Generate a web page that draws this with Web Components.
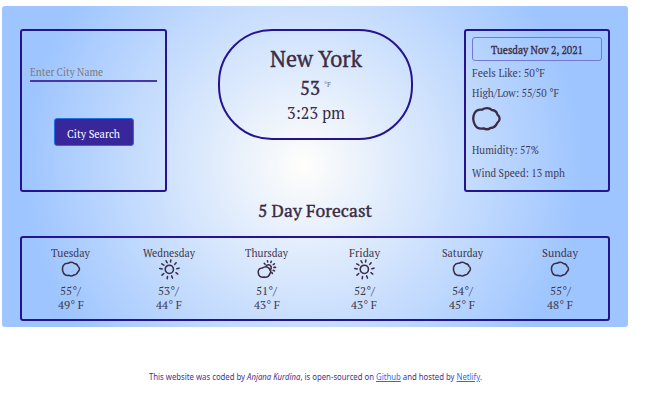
<!DOCTYPE html>
<html lang="en"><head><meta charset="utf-8"><title>Weather</title>
<style>
body{margin:0;background:#fff;color:#3b2b43;font-family:"PT Serif","Liberation Serif",serif;overflow:hidden}
</style></head><body>
<weather-app></weather-app>
<script>
const define=(name,html,ready)=>customElements.define(name,class extends HTMLElement{
  connectedCallback(){
    if(this.shadowRoot)return;
    this.attachShadow({mode:'open'}).innerHTML=typeof html==='function'?html(this):html;
    if(ready)ready(this);
  }
});
/* A single line whose glyphs are condensed or widened to fill the width in `w`. */
define('fit-text',`<style>:host{display:block;white-space:nowrap}span{display:inline-block;transform-origin:0 50%}</style><span><slot></slot></span>`,el=>{
  const s=el.shadowRoot.querySelector('span'),w=+el.getAttribute('w');
  const natural=s.getBoundingClientRect().width;
  s.style.transform=`scaleX(${w/natural})`;
  el.style.width=w+'px';
});
const cloud='<path d="M11 4.7C14 2.6 18.5 2.6 20.8 5C24 5.3 25.8 7.3 26.3 9.3C29.4 12 29.4 15.4 26.3 17.8C24.8 21.4 22.5 23 19.5 23C17 24.9 14.5 24.4 12.5 23.4C8.5 24 5.5 23 4 20C2 16 1.8 11.5 3.5 8.2C5 5.5 8 4.4 11 4.7Z"/>';
const sun='<circle cx="16" cy="14" r="6.4"/><path d="M17.9 2.5l.5-3M24.5 6.3l2.1-2.4M27.6 13l3.4-.8M26.3 19.3l2.8 2M19.6 24.2l1.3 3.4M13.2 25.3l-.5 3.2M7.4 20.5l-2.8 2.5M5 13.4l-3.8-.6M7.6 7.4L4.3 5.6M12.6 3.8L11 .8"/>';
const partly='<path d="M8.5 12C12 9 16 9.3 18 12C21.4 14 22.3 18 20 21C18.6 25 14.5 26.8 10.8 26C6 27 2 24.5 2 19.5C1.2 15 4 11.8 8.5 12Z"/><path d="M13.8 9.4C15.4 5.6 20.8 6 22 10C22.6 12.4 21.6 14.2 20.2 15.3M11.2 4.6l1.3 1.6M16.2.6l.4 2M22.2 1.4l-.8 2M27 5.4l-1.8 1.2M26.2 11l2.6 0M25 15.4l2.2 1M22.9 18.8l1 1.7"/>';
define('weather-icon',el=>`<style>:host{display:block;line-height:0}svg{width:100%;height:100%;overflow:visible;fill:none;stroke:#3b2b43;stroke-width:${el.getAttribute('stroke')||2.3};stroke-linecap:round;stroke-linejoin:round}</style><svg viewBox="0 0 31 27">${{cloud,sun,partly}[el.getAttribute('type')]}</svg>`);
define('city-search',`<style>
:host{display:flex;flex-direction:column;align-items:center;box-sizing:border-box;border:2px solid #26138f;border-radius:3px;padding:31px 7px 0}
.field{width:127px;height:18px;border-bottom:2px solid #4936a9;color:#7a7b80;font-size:11.5px;line-height:20px}
button{margin:36px 0 0;padding:2px 0 0;width:80px;height:28px;border:1px solid #236de5;border-radius:3px;background:#38279b;color:#fff;font:12px "PT Serif","Liberation Serif",serif;display:flex;align-items:center;justify-content:center}
</style><div class="field"><fit-text w="73">Enter City Name</fit-text></div><button><fit-text w="53">City Search</fit-text></button>`);
define('city-now',`<style>
:host{display:flex;flex-direction:column;align-items:center;box-sizing:border-box;border:2px solid #26138f;border-radius:54px;padding-top:13px}
.city{font-size:24px;line-height:28px;-webkit-text-stroke:.4px}
.temp{display:flex;gap:4px;align-items:flex-start;height:29px;line-height:31px;font-size:19px;-webkit-text-stroke:.35px}
small{font-size:7px;line-height:25px;color:#677189;-webkit-text-stroke:0}
.time{font-size:17.5px;line-height:24px}
</style><fit-text class="city" w="92">New York</fit-text><div class="temp"><fit-text w="20">53</fit-text><small>°F</small></div><fit-text class="time" w="58">3:23 pm</fit-text>`);
define('today-details',`<style>
:host{display:flex;flex-direction:column;box-sizing:border-box;border:2px solid #26138f;border-radius:3px;padding:6px 6px 0 6px;font-size:11.8px;color:#423d55}
.date{display:flex;justify-content:center;box-sizing:border-box;width:130px;height:24px;border:1px solid #7478d2;border-radius:3px;line-height:24px;font-size:12px;color:#3b2b43;-webkit-text-stroke:.35px}
.row{line-height:20px;height:20px}
weather-icon{width:31px;height:27px;margin:2px 0 8px -1px}
weather-icon+.row+.row{margin-top:3px}
</style><div class="date"><fit-text w="92">Tuesday Nov 2, 2021</fit-text></div>
<div class="row" style="margin-top:2px"><fit-text w="73">Feels Like: 50°F</fit-text></div>
<div class="row"><fit-text w="87">High/Low: 55/50 °F</fit-text></div>
<weather-icon type="cloud"></weather-icon>
<div class="row"><fit-text w="67">Humidity: 57%</fit-text></div>
<div class="row"><fit-text w="93">Wind Speed: 13 mph</fit-text></div>`);
define('forecast-day',el=>{const a=k=>el.getAttribute(k);return `<style>
:host{display:flex;flex-direction:column;align-items:center;color:#423747;font-size:11.8px;line-height:15px}
weather-icon{width:20px;height:18px;margin:0 0 5px}
.low{font-size:10.5px;line-height:14px}
</style><fit-text w="${a('w')}">${a('day')}</fit-text><weather-icon type="${a('icon')}" stroke="2.4"></weather-icon><fit-text w="21">${a('high')}°/</fit-text><fit-text class="low" w="26">${a('low')}° F</fit-text>`});
define('five-day',`<style>
:host{display:grid;grid-template-columns:repeat(6,97.9px);justify-content:center;box-sizing:border-box;border:2px solid #26138f;border-radius:3px;padding:7px 0 0 1px}
</style>
<forecast-day day="Tuesday" w="39" icon="cloud" high="55" low="49"></forecast-day>
<forecast-day day="Wednesday" w="52" icon="sun" high="53" low="44"></forecast-day>
<forecast-day day="Thursday" w="43" icon="partly" high="51" low="43"></forecast-day>
<forecast-day day="Friday" w="31" icon="sun" high="52" low="43"></forecast-day>
<forecast-day day="Saturday" w="41" icon="cloud" high="54" low="45"></forecast-day>
<forecast-day day="Sunday" w="36" icon="cloud" high="55" low="48"></forecast-day>`);
define('page-footer',`<style>
:host{display:flex;justify-content:center;width:630px;margin-top:43px;font:8.2px/14px "Noto Sans","Open Sans",sans-serif;color:#48318f}
a{color:#1b72f5;text-decoration:underline}
</style><fit-text w="333">This website was coded by <em>Anjana Kurdina</em>, is open-sourced on <a href="#">Github</a> and hosted by <a href="#">Netlify</a>.</fit-text>`);
define('weather-app',`<style>
:host{display:block;padding:6px 0 0 2px}
main{box-sizing:border-box;width:626px;height:321px;border-radius:3px;padding:23px 18px 0;background:radial-gradient(circle at 301px 159px,#fffefb 0,#9ec5ff 280px)}
.top{display:grid;grid-template-columns:147px 195px 146px;justify-content:space-between;align-items:start}
city-search,today-details{height:163px}
city-now{height:111px}
h2{margin:6px 0 12px;font-size:18px;line-height:24px;height:26px;font-weight:400;display:flex;justify-content:center;-webkit-text-stroke:.4px}
five-day{height:85px}
page-footer{margin-left:-2px}
</style><main><div class="top"><city-search></city-search><city-now></city-now><today-details></today-details></div>
<h2><fit-text w="114">5 Day Forecast</fit-text></h2><five-day></five-day></main><page-footer></page-footer>`);
</script></body></html>
